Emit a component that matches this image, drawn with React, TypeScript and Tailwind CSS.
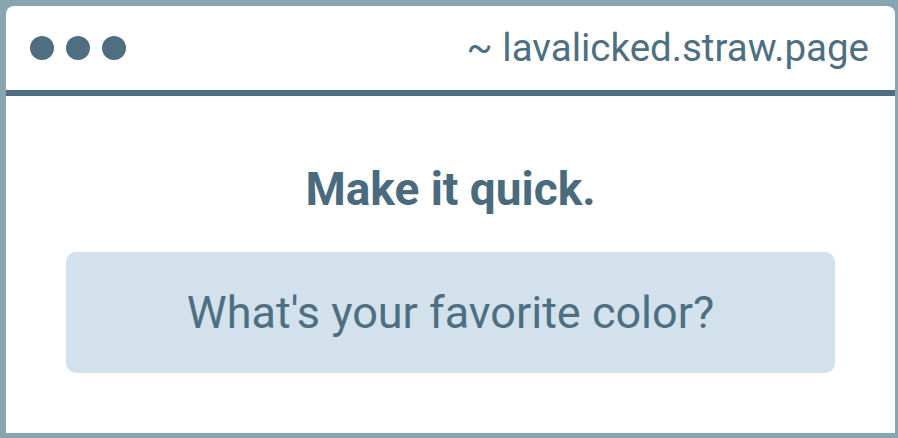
export default function App() {
  return (
    <div className="w-[898px] h-[438px] bg-[#87a6b2] pt-[6px] pl-[6px] pr-[3px] pb-[5px] font-['Roboto',sans-serif]">
      <div className="h-full bg-white rounded-t-[8px] flex flex-col">
        {/* Title bar */}
        <div className="h-[84px] flex items-center justify-between pl-[24px] pr-[26px]">
          <div className="flex gap-[12px]">
            <span className="w-[24px] h-[24px] rounded-full bg-[#4e6f82]" />
            <span className="w-[24px] h-[24px] rounded-full bg-[#4e6f82]" />
            <span className="w-[24px] h-[24px] rounded-full bg-[#4e6f82]" />
          </div>
          <span className="text-[38.5px] leading-[48px] text-[#4e6f82]">~ lavalicked.straw.page</span>
        </div>
        <div className="h-[6px] bg-[#4e6f82]" />

        {/* Body */}
        <div className="flex flex-col items-center pt-[69px] px-[60px]">
          <h1 className="text-[46px] leading-[48px] font-bold text-[#4a6a7e]">Make it quick.</h1>
          <div className="mt-[39px] w-full h-[121px] rounded-[10px] bg-[#d2e1eb] flex items-center justify-center">
            <span className="text-[45px] leading-[48px] text-[#4e6f82]">What's your favorite color?</span>
          </div>
        </div>
      </div>
    </div>
  );
}
